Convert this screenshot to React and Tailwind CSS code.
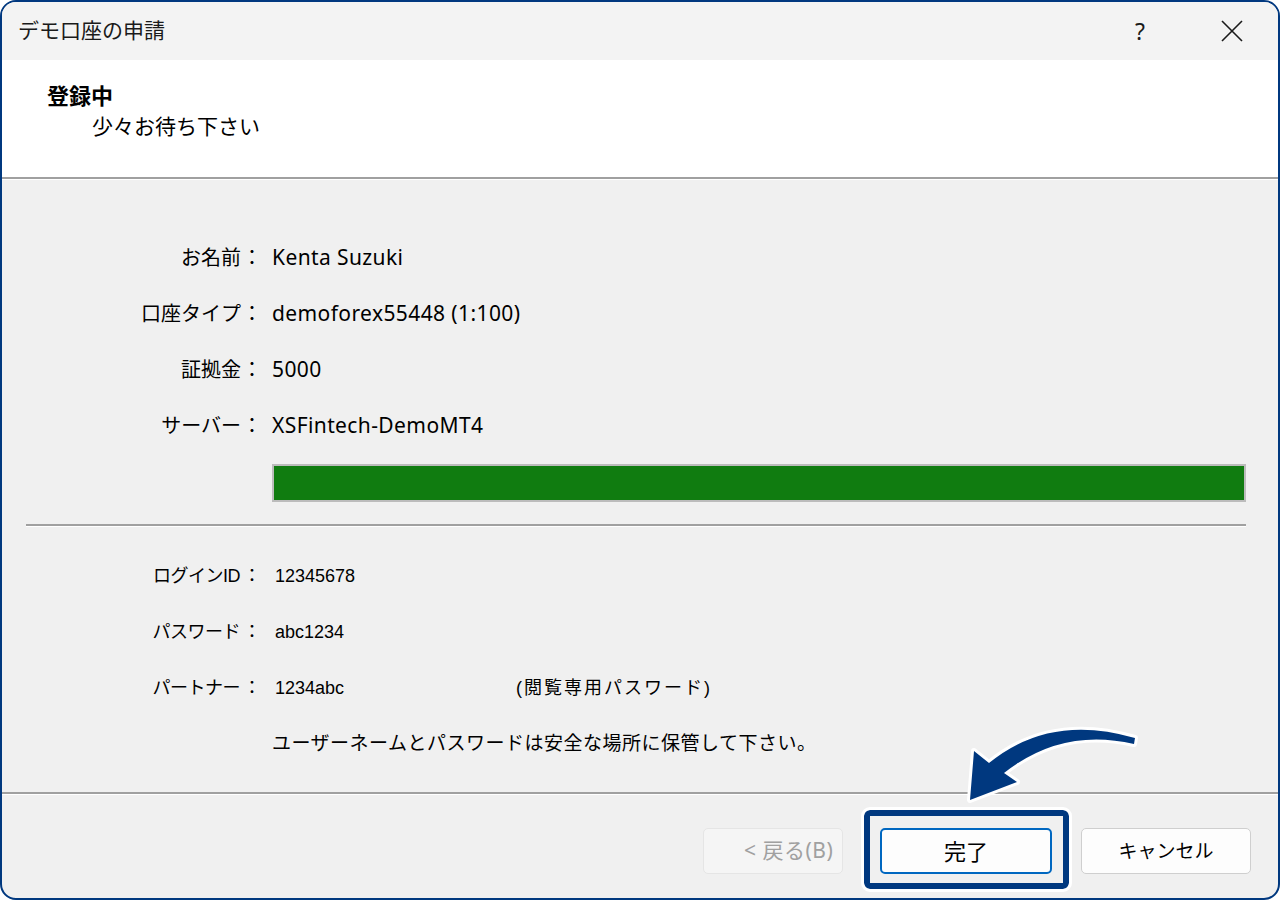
import React from "react";

const jp = "font-['Noto_Sans','Noto_Sans_CJK_JP',sans-serif]";
const ui = "font-['Liberation_Sans','Noto_Sans_CJK_JP',sans-serif]";

const accountRows = [
  ["お名前", "Kenta Suzuki"],
  ["口座タイプ", "demoforex55448 (1:100)"],
  ["証拠金", "5000"],
  ["サーバー", "XSFintech-DemoMT4"],
];

function InfoRow({ label, value }) {
  return (
    <div className="flex h-[56px] items-center text-[20px] text-black">
      <div className="w-[239px] text-right">{label}</div>
      <div className="w-[22px] text-center">：</div>
      <div className="ml-[9px] text-[21px] tracking-[0.4px]">{value}</div>
    </div>
  );
}

function LoginRow({ label, children }) {
  return (
    <div className={`flex h-[56px] items-center text-[18px] text-black ${ui}`}>
      <div className="w-[238px] text-right tracking-[-0.5px]">{label}</div>
      <div className="w-[24px] text-center">：</div>
      <div className="ml-[11px] flex items-center">{children}</div>
    </div>
  );
}

function Separator({ className = "" }) {
  return (
    <div className={className}>
      <div className="h-[2px] bg-[#a0a0a0]" />
      <div className="h-px bg-white" />
    </div>
  );
}

export default function App() {
  return (
    <div className={`relative h-[900px] w-[1280px] bg-white ${jp}`}>
      <div className="flex h-full w-full flex-col overflow-hidden rounded-[16px] border-2 border-[#00387f] bg-[#f0f0f0]">
        {/* title bar */}
        <div className="flex h-[58px] shrink-0 items-center bg-[#f3f3f3]">
          <div className="pl-[16px] text-[21px] text-[#1a1a1a]">デモ口座の申請</div>
          <div className="ml-auto flex h-full items-center">
            <div className="flex h-full w-[92px] items-center justify-center text-[23px] text-[#1a1a1a]">?</div>
            <div className="flex h-full w-[92px] items-center justify-center">
              <svg width="22" height="22" viewBox="0 0 22 22" fill="none" stroke="#1a1a1a" strokeWidth="1.6">
                <path d="M1 1L21 21M21 1L1 21" />
              </svg>
            </div>
          </div>
        </div>

        {/* header */}
        <div className="h-[117px] shrink-0 bg-white pl-[45px] pt-[21px]">
          <div className="text-[22px] font-bold leading-[29px] text-black">登録中</div>
          <div className="ml-[45px] mt-[2px] text-[21px] leading-[28px] text-black">少々お待ち下さい</div>
        </div>
        <Separator />

        {/* body */}
        <div className="flex-1 pt-[50px]">
          {accountRows.map(([label, value]) => (
            <InfoRow key={label} label={label} value={value} />
          ))}
          <div className="ml-[270px] mr-[32px] mt-[10px] h-[38px] border-2 border-[#bcbcbc] bg-[#107c10]" />
          <Separator className="ml-[24px] mr-[32px] mt-[22px]" />
          <div className="pt-[21px]">
            <LoginRow label="ログインID">12345678</LoginRow>
            <LoginRow label="パスワード">abc1234</LoginRow>
            <LoginRow label="パートナー">
              <span className="w-[241px]">1234abc</span>
              <span className="tracking-[2px]">(閲覧専用パスワード)</span>
            </LoginRow>
            <div className={`flex h-[56px] items-center pl-[270px] text-[19px] tracking-[0.5px] text-black ${ui}`}>
              ユーザーネームとパスワードは安全な場所に保管して下さい。
            </div>
          </div>
        </div>

        {/* footer */}
        <Separator />
        <div className="flex h-[103px] shrink-0 items-start pt-[33px] pl-[701px]">
          <button className="h-[46px] w-[140px] rounded-[5px] border border-[#e5e5e5] bg-[#f5f5f5] pl-[40px] text-left text-[21px] tracking-[0.5px] text-[#a0a0a0]">
            &lt; 戻る(B)
          </button>
          <button className="ml-[37px] h-[46px] w-[172px] rounded-[5px] border-2 border-[#0067c0] bg-[#fdfdfd] text-[22px] text-black">
            完了
          </button>
          <button className="ml-[29px] h-[46px] w-[170px] rounded-[5px] border border-[#cfcfcf] bg-[#fdfdfd] text-[19px] text-black">
            キャンセル
          </button>
        </div>
      </div>

      {/* highlight frame over the finish button */}
      <div className="pointer-events-none absolute left-[864px] top-[810px] h-[79px] w-[205px] rounded-[6px] border-[6px] border-[#00387f] outline-[3px] outline-white" />

      {/* arrow */}
      <svg className="pointer-events-none absolute left-0 top-0" width="1280" height="900" viewBox="0 0 1280 900">
        <path
          d="M970 800 L974 751 L989 763 Q1050 713 1135 738 L1134 744 Q1062 727 1004 773 L1017 782 Z"
          fill="#00387f"
          stroke="white"
          strokeWidth="6"
          strokeLinejoin="round"
          paintOrder="stroke"
        />
      </svg>
    </div>
  );
}
